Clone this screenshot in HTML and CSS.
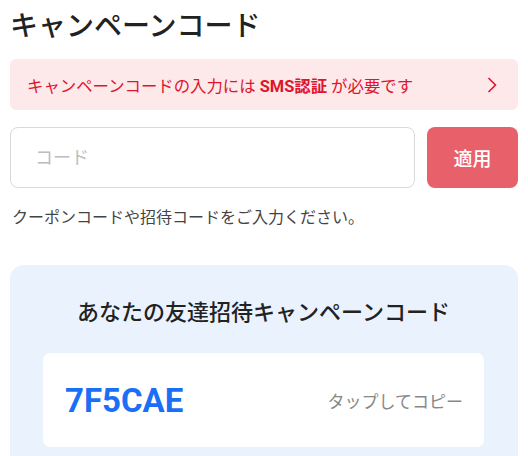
FILE: index.html
```html
<!DOCTYPE html>
<html lang="ja">
<head>
    <meta charset="utf-8">
    <link rel="stylesheet" href="styles.css">
</head>
<body>

<div class="page">
  <h1 class="title">キャンペーンコード</h1>

  <a class="notice" href="#">
    <span class="notice-text">キャンペーンコードの入力には <b>SMS認証</b> が必要です</span>
    <svg class="chevron" width="10" height="16" viewBox="0 0 10 16">
      <path d="M1.5 1 L8.5 8 L1.5 15" fill="none" stroke="#e0142c" stroke-width="1.6"/>
    </svg>
  </a>

  <div class="code-form">
    <input class="code-input" type="text" placeholder="コード">
    <button class="apply">適用</button>
  </div>
  <p class="hint">クーポンコードや招待コードをご入力ください。</p>

  <div class="invite">
    <h2 class="invite-title">あなたの友達招待キャンペーンコード</h2>
    <div class="invite-box">
      <span class="invite-code">7F5CAE</span>
      <span class="copy">タップしてコピー</span>
    </div>
  </div>
</div>

</body>
</html>
```

FILE: styles.css
```css
* {
  margin: 0px;
  padding: 0px;
  box-sizing: border-box;
}
body {
  font-family: Roboto, "Noto Sans CJK JP", sans-serif;
  color: #222;
  background: #fff;
}
.page {
  padding: 0 10px;
}
.title {
  font-size: 28px;
  font-weight: 500;
  line-height: 38px;
  padding-top: 8px;
  height: 59px;
  color: #222;
}
.notice {
  display: flex;
  align-items: center;
  justify-content: space-between;
  height: 51px;
  padding: 0 21px 0 17px;
  background-color: #fde8ea;
  border-radius: 6px;
  color: #e0142c;
  text-decoration: none;
  font-size: 16.4px;
}
.notice b {
  font-weight: 700;
}
.code-form {
  display: flex;
  gap: 12px;
  margin-top: 17px;
}
.code-input {
  flex: 1;
  height: 61px;
  border: 1px solid #d9d9d9;
  border-radius: 8px;
  padding: 0 24px;
  font-family: inherit;
  font-size: 18px;
  outline: none;
}
.code-input::placeholder {
  color: #bdbdbd;
}
.apply {
  width: 91px;
  height: 61px;
  border: none;
  border-radius: 8px;
  background-color: #e8606a;
  color: #fff;
  font-family: inherit;
  font-size: 19px;
  font-weight: 500;
}
.hint {
  font-size: 16px;
  color: #444;
  line-height: 24px;
  margin-top: 18px;
  padding-left: 2px;
}
.invite {
  margin-top: 35px;
  background-color: #eaf2fd;
  border-radius: 14px;
  padding: 32px 34px 30px 33px;
}
.invite-title {
  text-align: center;
  font-size: 22px;
  font-weight: 500;
  line-height: 32px;
  color: #222;
}
.invite-box {
  display: flex;
  align-items: center;
  justify-content: space-between;
  margin-top: 24px;
  height: 94px;
  background: #fff;
  border-radius: 7px;
  padding: 0 21px 0 22px;
}
.invite-code {
  font-size: 33px;
  font-weight: 700;
  color: #1a6ff5;
}
.copy {
  font-size: 17px;
  color: #888;
}
```
